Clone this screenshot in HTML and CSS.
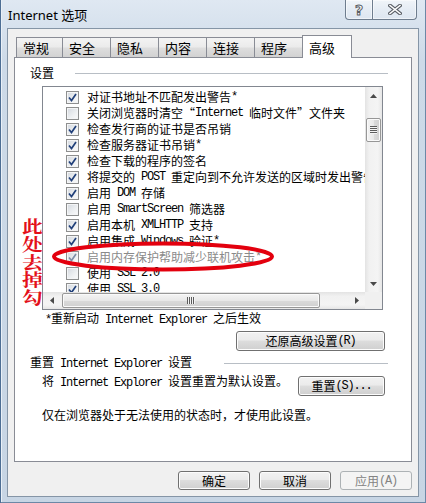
FILE: index.html
```html
<!DOCTYPE html>
<html lang="zh-CN">
<head>
<meta charset="utf-8">
<title>Internet 选项</title>
<link rel="stylesheet" href="styles.css">
</head>
<body>
<div class="window">
  <div class="titlebar">
    <span class="title">Internet 选项</span>
    <div class="caption">
      <div class="cbtn help"><span class="qmark">?</span></div>
      <div class="cbtn close">
        <svg width="14" height="11" viewBox="0 0 14 11"><path d="M2 1.5 L12 9.5 M12 1.5 L2 9.5" stroke="#5a5f66" stroke-width="3.6" stroke-linecap="square" fill="none"/><path d="M2 1.5 L12 9.5 M12 1.5 L2 9.5" stroke="#ffffff" stroke-width="1.6" stroke-linecap="square" fill="none"/></svg>
      </div>
    </div>
  </div>
  <div class="client">
    <div class="tabs">
      <div class="tab first">常规</div>
      <div class="tab">安全</div>
      <div class="tab">隐私</div>
      <div class="tab">内容</div>
      <div class="tab">连接</div>
      <div class="tab">程序</div>
      <div class="tab sel">高级</div>
    </div>
    <div class="panel">
      <div class="ghead"><span>设置</span><div class="rule r1"></div></div>
      <div class="listbox">
        <div class="items">
          <div class="row"><span class="cb on"><svg width="9" height="9" viewBox="0 0 9 9"><path d="M1 4.5 L3.5 7.5 L8 1" stroke="#21407a" stroke-width="1.7" fill="none"/></svg></span>对证书地址不匹配发出警告<span class="lat">*</span></div>
          <div class="row"><span class="cb"></span>关闭浏览器时清空“<span class="lat">Internet </span>临时文件”文件夹</div>
          <div class="row"><span class="cb on"><svg width="9" height="9" viewBox="0 0 9 9"><path d="M1 4.5 L3.5 7.5 L8 1" stroke="#21407a" stroke-width="1.7" fill="none"/></svg></span>检查发行商的证书是否吊销</div>
          <div class="row"><span class="cb on"><svg width="9" height="9" viewBox="0 0 9 9"><path d="M1 4.5 L3.5 7.5 L8 1" stroke="#21407a" stroke-width="1.7" fill="none"/></svg></span>检查服务器证书吊销<span class="lat">*</span></div>
          <div class="row"><span class="cb on"><svg width="9" height="9" viewBox="0 0 9 9"><path d="M1 4.5 L3.5 7.5 L8 1" stroke="#21407a" stroke-width="1.7" fill="none"/></svg></span>检查下载的程序的签名</div>
          <div class="row"><span class="cb on"><svg width="9" height="9" viewBox="0 0 9 9"><path d="M1 4.5 L3.5 7.5 L8 1" stroke="#21407a" stroke-width="1.7" fill="none"/></svg></span>将提交的<span class="lat"> POST </span>重定向到不允许发送的区域时发出警告</div>
          <div class="row"><span class="cb on"><svg width="9" height="9" viewBox="0 0 9 9"><path d="M1 4.5 L3.5 7.5 L8 1" stroke="#21407a" stroke-width="1.7" fill="none"/></svg></span>启用<span class="lat"> DOM </span>存储</div>
          <div class="row"><span class="cb"></span>启用<span class="lat"> SmartScreen </span>筛选器</div>
          <div class="row"><span class="cb on"><svg width="9" height="9" viewBox="0 0 9 9"><path d="M1 4.5 L3.5 7.5 L8 1" stroke="#21407a" stroke-width="1.7" fill="none"/></svg></span>启用本机<span class="lat"> XMLHTTP </span>支持</div>
          <div class="row"><span class="cb on"><svg width="9" height="9" viewBox="0 0 9 9"><path d="M1 4.5 L3.5 7.5 L8 1" stroke="#21407a" stroke-width="1.7" fill="none"/></svg></span>启用集成<span class="lat"> Windows </span>验证<span class="lat">*</span></div>
          <div class="row dis"><span class="cb on"><svg width="9" height="9" viewBox="0 0 9 9"><path d="M1 4.5 L3.5 7.5 L8 1" stroke="#7f8ea8" stroke-width="1.7" fill="none"/></svg></span>启用内存保护帮助减少联机攻击<span class="lat">*</span></div>
          <div class="row"><span class="cb"></span>使用<span class="lat"> SSL 2.0</span></div>
          <div class="row"><span class="cb on"><svg width="9" height="9" viewBox="0 0 9 9"><path d="M1 4.5 L3.5 7.5 L8 1" stroke="#21407a" stroke-width="1.7" fill="none"/></svg></span>使用<span class="lat"> SSL 3.0</span></div>
        </div>
        <div class="vscroll">
          <div class="arrow"><svg width="7" height="4" viewBox="0 0 7 4"><path d="M0 4 L3.5 0 L7 4 Z" fill="#4a4a4a"/></svg></div>
          <div class="vthumb"><span class="vgrip"></span></div>
          <div class="fill"></div>
          <div class="arrow"><svg width="7" height="4" viewBox="0 0 7 4"><path d="M0 0 L3.5 4 L7 0 Z" fill="#4a4a4a"/></svg></div>
        </div>
        <div class="hscroll">
          <div class="arrow"><svg width="4" height="7" viewBox="0 0 4 7"><path d="M4 0 L0 3.5 L4 7 Z" fill="#4a4a4a"/></svg></div>
          <div class="hthumb"><span class="hgrip"></span></div>
          <div class="fill"></div>
          <div class="arrow"><svg width="4" height="7" viewBox="0 0 4 7"><path d="M0 0 L4 3.5 L0 7 Z" fill="#4a4a4a"/></svg></div>
        </div>
        <div class="corner"></div>
      </div>
      <div class="note"><span class="lat">*</span>重新启动<span class="lat"> Internet Explorer </span>之后生效</div>
      <div class="btnrow"><button class="btn restore">还原高级设置<span class="lat">(R)</span></button></div>
      <div class="ghead g2"><span>重置<span class="lat"> Internet Explorer </span>设置</span><div class="rule r2"></div></div>
      <div class="resetrow">
        <span>将<span class="lat"> Internet Explorer </span>设置重置为默认设置。</span>
        <button class="btn reset">重置<span class="lat">(S)...</span></button>
      </div>
      <div class="hint">仅在浏览器处于无法使用的状态时，才使用此设置。</div>
    </div>
    <div class="footer">
      <button class="btn fbtn">确定</button>
      <button class="btn fbtn">取消</button>
      <button class="btn fbtn disabled">应用<span class="lat">(A)</span></button>
    </div>
  </div>
  <div class="annot"><span>此</span><span>处</span><span>去</span><span>掉</span><span>勾</span></div>
  <svg class="ring" width="228" height="34" viewBox="0 0 228 34"><ellipse cx="113" cy="16.5" rx="109" ry="13" fill="none" stroke="#e3000e" stroke-width="4"/></svg>
</div>
</body>
</html>
```
FILE: styles.css
```css
html, body {
  margin: 0;
  padding: 0;
}
body {
  width: 426px;
  height: 503px;
  overflow: hidden;
  font-family: "Noto Sans CJK SC", sans-serif;
  font-size: 12px;
  color: #000;
}
.window {
  position: relative;
  width: 426px;
  height: 503px;
  box-sizing: border-box;
  display: flex;
  flex-direction: column;
  background: linear-gradient(180deg, #dfe8f2 0%, #cddae8 12%, #c7d5e4 100%);
  box-shadow: inset 1px 0 0 #4d6e94, inset -1px 0 0 #6c88a6, inset 0 -1px 0 #6c88a6, inset 2px 0 0 #e9f0f7;
}
.titlebar {
  height: 28px;
  flex: none;
  display: flex;
  align-items: flex-start;
  padding-left: 8px;
}
.title {
  font-family: "Noto Sans", "Noto Sans CJK SC", sans-serif;
  font-size: 13px;
  line-height: 16px;
  margin-top: 7px;
}
.caption {
  margin-left: auto;
  margin-right: 9px;
  display: flex;
}
.cbtn {
  height: 20px;
  box-sizing: border-box;
  border: 1px solid #6e7d8e;
  border-top: none;
  background: linear-gradient(180deg, rgba(255,255,255,0.55) 0%, rgba(255,255,255,0.25) 50%, rgba(255,255,255,0.1) 100%);
  display: flex;
  align-items: center;
  justify-content: center;
  box-shadow: inset 0 0 0 1px rgba(255,255,255,0.5);
}
.help {
  width: 28px;
  border-radius: 0 0 0 4px;
}
.close {
  width: 44px;
  border-left: none;
  border-radius: 0 0 4px 0;
}
.qmark {
  font-family: "DejaVu Sans", sans-serif;
  font-weight: bold;
  font-size: 14px;
  line-height: 14px;
  color: #fff;
  -webkit-text-stroke: 1px #5a5f66;
}
.client {
  flex: 1;
  margin: 0 7px 6px;
  border: 1px solid #8595a6;
  background: #f0f0f0;
  padding: 6px 6px 0;
  display: flex;
  flex-direction: column;
}
.tabs {
  height: 22px;
  display: flex;
  align-items: flex-end;
  padding-left: 2px;
  flex: none;
}
.tab {
  width: 48px;
  height: 20px;
  box-sizing: border-box;
  border: 1px solid #898c95;
  border-left: none;
  border-bottom: none;
  background: linear-gradient(180deg, #f3f3f3 0%, #ebebeb 48%, #dedede 52%, #d2d2d2 100%);
  padding-left: 6px;
  font-size: 13px;
  line-height: 19px;
}
.tab.first {
  width: 47px;
  border-left: 1px solid #898c95;
}
.tab.sel {
  width: 50px;
  height: 23px;
  margin-left: -1px;
  margin-bottom: -1px;
  border-left: 1px solid #898c95;
  background: #fff;
  padding-top: 2px;
  position: relative;
  z-index: 1;
}
.panel {
  height: 405px;
  flex: none;
  box-sizing: border-box;
  border: 1px solid #898c95;
  background: #fff;
  padding: 7px 23px 0 15px;
  display: flex;
  flex-direction: column;
}
.ghead {
  display: flex;
  align-items: center;
  height: 16px;
  line-height: 16px;
}
.rule {
  flex: 1;
  height: 1px;
  background: #b8bec5;
}
.r1 { margin-left: 21px; }
.r2 { margin-left: 32px; }
.lat {
  font-family: "Liberation Mono", monospace;
  font-size: 12px;
  letter-spacing: -1.2px;
  white-space: pre;
}
.listbox {
  margin: 5px 5px 0 12px;
  height: 224px;
  box-sizing: border-box;
  border: 1px solid #828790;
  display: grid;
  grid-template-columns: 1fr 17px;
  grid-template-rows: 1fr 17px;
  flex: none;
}
.items {
  overflow: hidden;
  padding: 2px 0 0 23px;
  min-width: 0;
}
.row {
  height: 16px;
  line-height: 16px;
  display: flex;
  align-items: center;
  white-space: nowrap;
}
.row.dis {
  color: #8a8a8a;
}
.cb {
  width: 13px;
  height: 13px;
  flex: none;
  box-sizing: border-box;
  border: 1px solid #8e8f8f;
  background: linear-gradient(135deg, #d3d8de 0%, #eef0f2 60%, #fbfbfb 100%);
  box-shadow: inset 0 0 0 1px #f4f5f6;
  margin-right: 8px;
  display: flex;
  align-items: center;
  justify-content: center;
}
.vscroll {
  grid-column: 2;
  grid-row: 1;
  display: flex;
  flex-direction: column;
  background: linear-gradient(90deg, #e3e3e3 0%, #f1f1f1 25%, #f4f4f4 75%, #e6e6e6 100%);
}
.vscroll .arrow {
  height: 17px;
  flex: none;
  display: flex;
  align-items: center;
  justify-content: center;
}
.vthumb {
  margin: 14px 1px 0;
  height: 24px;
  flex: none;
  box-sizing: border-box;
  border: 1px solid #979797;
  border-radius: 2px;
  background: linear-gradient(90deg, #f4f4f4 0%, #e8e8e8 50%, #dadada 52%, #d0d0d0 100%);
  box-shadow: inset 0 0 0 1px #fafafa;
  display: flex;
  align-items: center;
  justify-content: center;
}
.vgrip {
  width: 7px;
  height: 8px;
  background: repeating-linear-gradient(180deg, #5c5c5c 0, #5c5c5c 1px, #f4f4f4 1px, #f4f4f4 2px);
}
.fill { flex: 1; }
.hscroll {
  grid-column: 1;
  grid-row: 2;
  display: flex;
  background: linear-gradient(180deg, #e3e3e3 0%, #f1f1f1 25%, #f4f4f4 75%, #e6e6e6 100%);
}
.hscroll .arrow {
  width: 17px;
  flex: none;
  display: flex;
  align-items: center;
  justify-content: center;
}
.hthumb {
  margin: 1px 0 1px 2px;
  width: 258px;
  flex: none;
  box-sizing: border-box;
  border: 1px solid #979797;
  border-radius: 2px;
  background: linear-gradient(180deg, #f4f4f4 0%, #e8e8e8 50%, #dadada 52%, #d0d0d0 100%);
  box-shadow: inset 0 0 0 1px #fafafa;
  display: flex;
  align-items: center;
  justify-content: center;
}
.hgrip {
  width: 8px;
  height: 7px;
  background: repeating-linear-gradient(90deg, #5c5c5c 0, #5c5c5c 1px, #f4f4f4 1px, #f4f4f4 2px);
}
.corner {
  grid-column: 2;
  grid-row: 2;
  background: #f0f0f0;
}
.note {
  margin-left: 15px;
  line-height: 16px;
  white-space: nowrap;
}
.btnrow {
  display: flex;
  justify-content: flex-end;
  margin: 3px 3px 0 0;
}
.btn {
  box-sizing: border-box;
  height: 20px;
  margin: 0;
  padding: 0;
  border: 1px solid #707070;
  border-radius: 3px;
  background: linear-gradient(180deg, #f2f2f2 0%, #ebebeb 45%, #dddddd 50%, #cfcfcf 100%);
  box-shadow: inset 0 0 0 1px #fcfcfc;
  font-family: "Noto Sans CJK SC", sans-serif;
  font-size: 12px;
  line-height: 16px;
  color: #000;
  display: flex;
  align-items: center;
  justify-content: center;
}
.restore { width: 149px; }
.g2 { margin-top: 4px; }
.resetrow {
  display: flex;
  align-items: flex-start;
  justify-content: space-between;
  margin: 2px 3px 0 12px;
  line-height: 16px;
  white-space: nowrap;
}
.reset {
  width: 87px;
  margin-top: 3px;
}
.hint {
  margin: 11px 0 0 12px;
  line-height: 16px;
}
.footer {
  display: flex;
  justify-content: flex-end;
  gap: 9px;
  margin-top: 9px;
}
.fbtn {
  width: 72px;
  height: 19px;
}
.fbtn.disabled {
  border-color: #adb2b5;
  background: #f4f4f4;
  color: #838383;
  box-shadow: none;
}
.annot {
  position: absolute;
  left: 22px;
  top: 218px;
  width: 17px;
  display: flex;
  flex-direction: column;
  font-family: "Noto Serif CJK SC", "Noto Sans CJK SC", serif;
  font-weight: bold;
  font-size: 16px;
  line-height: 16px;
  color: #e3101a;
  transform: scale(1.3, 1.1);
  transform-origin: 0 0;
}
.ring {
  position: absolute;
  left: 50px;
  top: 240px;
}
```
